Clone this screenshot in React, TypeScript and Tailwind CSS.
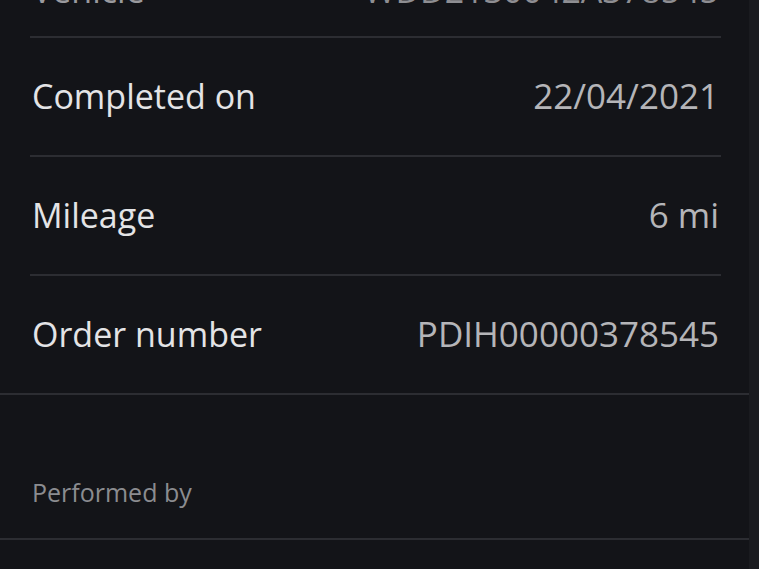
const rows = [
  { label: "Completed on", value: "22/04/2021" },
  { label: "Mileage", value: "6 mi" },
  { label: "Order number", value: "PDIH00000378545" },
];

const App = () => {
  return (
    <div
      className="flex w-[759px] h-[569px] overflow-hidden bg-[#131418]"
      style={{ fontFamily: '"Open Sans", "Noto Sans", sans-serif' }}
    >
      <div className="w-[749px] flex flex-col">
        {/* Row scrolled mostly out of view */}
        <div className="pl-[32px] pr-[30px] h-[36px] flex items-start justify-between text-[34px] leading-[40px]">
          <span className="mt-[-30px] text-[#9a9a9e]">Vehicle</span>
          <span className="mt-[-30px] text-[#8e8e92]">WDD2130042A378545</span>
        </div>

        <div className="pl-[30px] pr-[28px]">
          {rows.map((row) => (
            <div key={row.label} className="border-t-2 border-[#2c2d32] h-[119px] flex items-center justify-between pl-[2px] pr-[2px]">
              <span className="text-[34px] text-[#e4e4e6]">{row.label}</span>
              <span className="text-[35px] text-[#b5b5b8]">{row.value}</span>
            </div>
          ))}
        </div>

        <div className="border-t-2 border-[#2c2d32] h-[145px] flex items-end px-[32px] pb-[27px]">
          <span className="text-[25px] text-[#8b8c90]">Performed by</span>
        </div>

        <div className="border-t-2 border-[#2c2d32] flex-1" />
      </div>
      <div className="flex-1 bg-[#1a1b1f]" />
    </div>
  );
};

export default App;
